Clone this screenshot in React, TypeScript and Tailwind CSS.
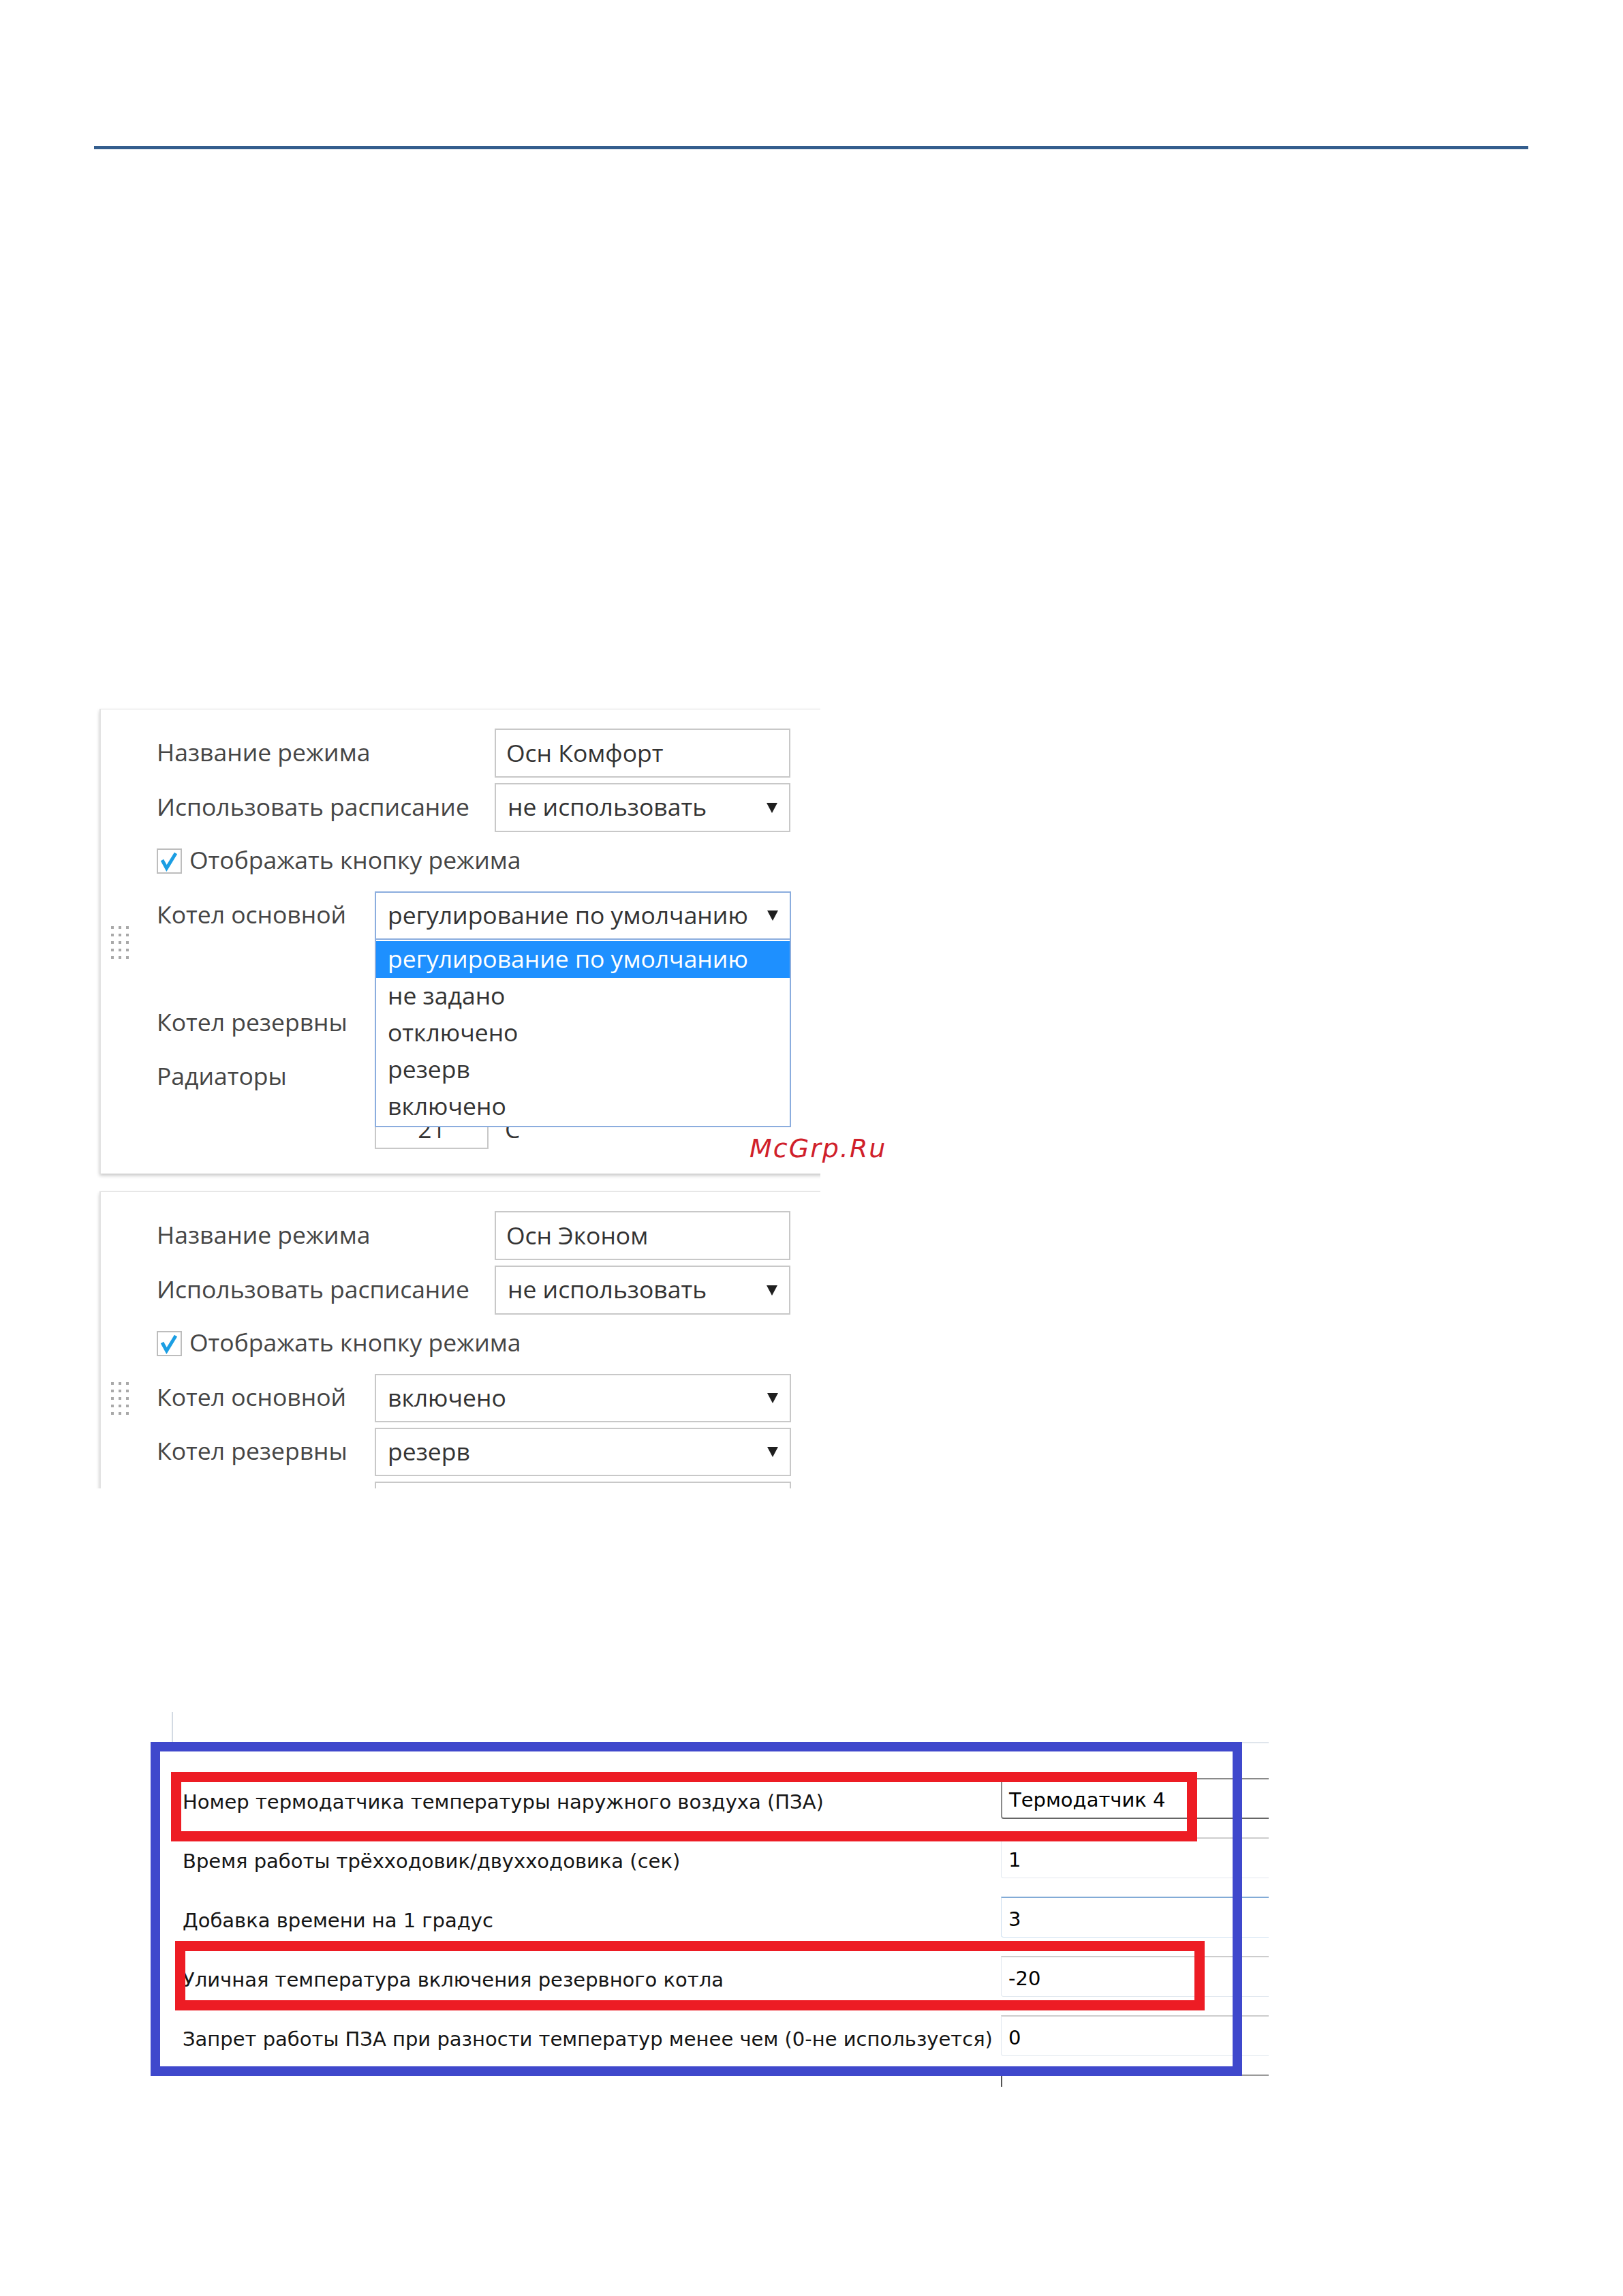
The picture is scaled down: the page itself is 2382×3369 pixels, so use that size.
import React from "react";

type Opt = { label: string; active?: boolean };

const KOTEL_OPTIONS: Opt[] = [
  { label: "регулирование по умолчанию", active: true },
  { label: "не задано" },
  { label: "отключено" },
  { label: "резерв" },
  { label: "включено" },
];

function Arrow() {
  return (
    <svg width="18" height="17" viewBox="0 0 18 17" className="shrink-0">
      <polygon points="1,1 17,1 9,16" fill="#1f1f1f" />
    </svg>
  );
}

function DragHandle() {
  return (
    <div className="grid grid-cols-3 gap-[7px] w-[26px]">
      {Array.from({ length: 15 }).map((_, i) => (
        <span key={i} className="block w-[4px] h-[4px] bg-[#a9a9a9]" />
      ))}
    </div>
  );
}

function TextBox({ value }: { value: string }) {
  return (
    <div className="w-[434px] h-full border-2 border-[#c8c8c8] flex items-center pl-[15px] text-[#333]">
      {value}
    </div>
  );
}

function SelectBox({
  value,
  width,
  focused = false,
  children,
}: {
  value: string;
  width: string;
  focused?: boolean;
  children?: React.ReactNode;
}) {
  return (
    <div
      className={`relative h-full ${width} border-2 ${focused ? "border-[#8badde]" : "border-[#c8c8c8]"} flex items-center justify-between pl-[17px] pr-[16px] text-[#333]`}
    >
      <span className="-mt-[2px]">{value}</span>
      <Arrow />
      {children}
    </div>
  );
}

function Row({
  label,
  labelW,
  handle,
  h = "h-[71px]",
  className = "",
  children,
}: {
  label?: string;
  labelW: string;
  handle?: boolean;
  h?: string;
  className?: string;
  children?: React.ReactNode;
}) {
  return (
    <div className={`flex ${h} items-center ${className}`}>
      <div className="w-[82px] shrink-0 pl-[15px]">{handle && <DragHandle />}</div>
      <div className={`${labelW} shrink-0 text-[#454545] -mt-[3px]`}>{label}</div>
      {children}
    </div>
  );
}

function CheckRow() {
  return (
    <div className="flex h-[37px] items-center mt-[24px]">
      <div className="w-[82px] shrink-0" />
      <div className="w-[37px] h-[37px] border-2 border-[#bdbdbd] bg-white flex items-center justify-center">
        <svg width="33" height="33" viewBox="0 0 33 33">
          <path d="M6 15 L12.5 27 L26 5" fill="none" stroke="#1b9ee3" strokeWidth="5" strokeLinejoin="miter" />
        </svg>
      </div>
      <span className="ml-[11px] text-[#454545] -mt-[3px]">Отображать кнопку режима</span>
    </div>
  );
}

function CardHead({ name }: { name: string }) {
  return (
    <>
      <Row label="Название режима" labelW="w-[496px]" h="h-[72px]">
        <TextBox value={name} />
      </Row>
      <Row label="Использовать расписание" labelW="w-[496px]" h="h-[72px]" className="mt-[8px]">
        <SelectBox value="не использовать" width="w-[434px]" />
      </Row>
      <CheckRow />
    </>
  );
}

const PZA_ROWS = [
  { label: "Номер термодатчика температуры наружного воздуха (ПЗА)", value: "Термодатчик 4", box: "border-2 border-[#8a8a8a] border-b-[#666] rounded-bl-[4px]" },
  { label: "Время работы трёхходовик/двухходовика (сек)", value: "1", box: "border-t-2 border-t-[#cdcdcd] border-l border-b border-l-[#e2e8ef] border-b-[#e2e8ef] rounded-bl-[4px]" },
  { label: "Добавка времени на 1 градус", value: "3", box: "border-t-2 border-t-[#82abd6] border-l border-b border-l-[#cddff0] border-b-[#cddff0] rounded-bl-[4px]" },
  { label: "Уличная температура включения резервного котла", value: "-20", box: "border-t-2 border-t-[#cdcdcd] border-l border-b border-l-[#e2e8ef] border-b-[#e2e8ef] rounded-bl-[4px]" },
  { label: "Запрет работы ПЗА при разности температур менее чем (0-не используется)", value: "0", box: "border-t-2 border-t-[#cdcdcd] border-l border-b border-l-[#e2e8ef] border-b-[#e2e8ef] rounded-bl-[4px]" },
  { label: "", value: "", box: "border-t-2 border-t-[#9a9a9a] border-l-2 border-l-[#555]" },
];

export default function App() {
  return (
    <div className="relative w-[2382px] h-[3369px] bg-white overflow-hidden">
      {/* top rule */}
      <div className="pt-[214px] pl-[138px]">
        <div className="w-[2105px] h-[5px] bg-[#345e8e]" />
      </div>

      {/* screenshot: режимы */}
      <div className="mt-[816px] ml-[140px] w-[1064px] h-[1149px] overflow-hidden font-['Open_Sans',sans-serif] text-[35.5px] leading-none">
        {/* card 1 */}
        <div className="mt-[5px] ml-[6px] w-[1100px] h-[682px] bg-white border-l-2 border-t border-[#e3e3e3] shadow-[0_3px_5px_rgba(0,0,0,0.22)] pt-[28px]">
          <CardHead name="Осн Комфорт" />

          {/* group with handle */}
          <div className="flex mt-[26px]">
            <div className="w-[82px] shrink-0 pl-[15px] flex items-center">
              <DragHandle />
            </div>
            <div className="flex flex-col gap-[8px]">
              <div className="flex h-[71px] items-center">
                <div className="w-[320px] shrink-0 text-[#454545] -mt-[3px]">Котел основной</div>
                <SelectBox value="регулирование по умолчанию" width="w-[611px]" focused>
                  <div className="absolute left-[-2px] top-full w-[611px] h-[277px] z-10 bg-white border-2 border-[#8badde] pt-[2px] text-[#333]">
                    {KOTEL_OPTIONS.map((o) => (
                      <div
                        key={o.label}
                        className={`h-[54px] flex items-center pl-[17px] ${o.active ? "bg-[#1e90ff] text-white" : ""}`}
                      >
                        <span className="-mt-[3px]">{o.label}</span>
                      </div>
                    ))}
                  </div>
                </SelectBox>
              </div>
              <div className="h-[71px]" />
            </div>
          </div>

          {/* rows covered by the open list */}
          <Row label="Котел резервны" labelW="w-[320px]" className="mt-[8px]">
            <SelectBox value="" width="w-[611px]" />
          </Row>
          <Row label="Радиаторы" labelW="w-[320px]" className="mt-[8px]">
            <SelectBox value="" width="w-[611px]" />
          </Row>
          <Row labelW="w-[320px]" h="h-[62px]" className="mt-[8px]">
            <div className="w-[167px] h-full border-2 border-[#c8c8c8] flex items-center justify-center text-[#333] pt-[4px]">
              21
            </div>
            <span className="ml-[24px] text-[#333] pt-[4px]">C</span>
          </Row>
        </div>

        {/* card 2 */}
        <div className="mt-[26px] ml-[6px] w-[1100px] h-[500px] bg-white border-l-2 border-t border-[#e3e3e3] shadow-[0_3px_5px_rgba(0,0,0,0.22)] pt-[28px]">
          <CardHead name="Осн Эконом" />
          <Row label="Котел основной" labelW="w-[320px]" handle className="mt-[26px]">
            <SelectBox value="включено" width="w-[611px]" />
          </Row>
          <Row label="Котел резервны" labelW="w-[320px]" className="mt-[8px]">
            <SelectBox value="резерв" width="w-[611px]" />
          </Row>
          <Row labelW="w-[320px]" className="mt-[8px]">
            <SelectBox value="" width="w-[611px]" />
          </Row>
        </div>
      </div>

      {/* watermark */}
      <div className="absolute left-[1100px] top-[1666px] text-[38px] leading-none italic tracking-[2px] text-[#d0202a] font-['DejaVu_Sans',sans-serif]">
        McGrp.Ru
      </div>

      {/* screenshot: параметры ПЗА */}
      <div className="relative mt-[325px] ml-[221px] w-[1641px] h-[553px] overflow-hidden font-['DejaVu_Sans',sans-serif] text-[29px] leading-none text-[#151515]">
        <div className="ml-[31px] mt-[3px] w-[2px] h-[44px] bg-[#d3dae3]" />
        <div className="ml-[1248px] w-[420px] h-[2px] bg-[#dfe5ec]" />
        <div className="pt-[51px] flex flex-col gap-[27px]">
          {PZA_ROWS.map((r, i) => (
            <div key={i} className="flex h-[60px] items-center">
              <div className="w-[1248px] shrink-0 pl-[47px] pt-[10px] whitespace-nowrap">{r.label}</div>
              <div className={`w-[420px] shrink-0 h-full flex items-center pl-[10px] pt-[5px] bg-white text-black ${r.box}`}>
                {r.value}
              </div>
            </div>
          ))}
        </div>

        {/* annotations */}
        <div className="absolute left-0 top-[47px] w-[1602px] h-[490px] border-[14px] border-[#3f48cc]" />
        <div className="absolute left-[30px] top-[91px] w-[1506px] h-[102px] border-[15px] border-[#ed1c24]" />
        <div className="absolute left-[36px] top-[339px] w-[1511px] h-[102px] border-[15px] border-[#ed1c24]" />
      </div>
    </div>
  );
}
